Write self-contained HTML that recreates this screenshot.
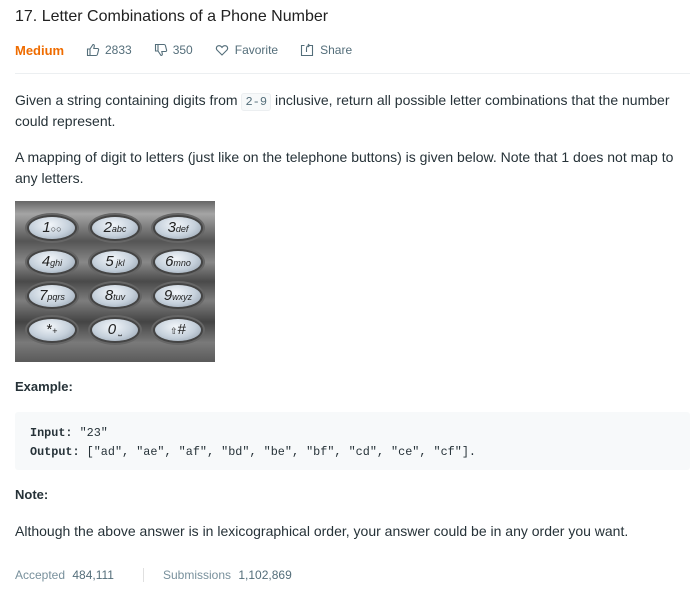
<!DOCTYPE html><html><head><meta charset="utf-8"><style>
body{margin:0;width:700px;height:595px;background:#fff;font-family:"Liberation Sans",sans-serif;color:#263238;position:relative;overflow:hidden}
.a{position:absolute;white-space:nowrap}
.t{font-size:14px;color:#263238;letter-spacing:0px}
.meta{font-size:12px;color:#546e7a;display:flex;align-items:center}
svg{display:block}
code{font-family:"Liberation Mono",monospace;font-size:12px;background:#f7f9fa;border:1px solid #eceff1;border-radius:3px;padding:1px 3px;color:#546e7a}
.k{position:absolute;width:46px;height:22px;border-radius:50%;background:radial-gradient(ellipse at 45% 35%,#f2f6fa 0%,#c5d0db 55%,#8d9aa8 100%);box-shadow:0 0 0 2px #444,0 0 0 4px #666;font-family:"Liberation Sans",sans-serif;font-style:italic;color:#222;font-size:15px;line-height:22px;text-align:center}
.k small{font-size:9px}
.mono{font-family:"Liberation Mono",monospace;font-size:11.8px;color:#263238}
</style></head><body>
<div class="a" style="left:15px;top:8px;font-size:16px;color:#212121">17. Letter Combinations of a Phone Number</div>
<div class="a" style="left:15px;top:43px;font-size:13px;font-weight:bold;color:#ef6c00">Medium</div>
<div class="a meta" style="left:86px;top:43px">
<svg width="14" height="14" viewBox="0 0 14 14" fill="none" stroke="#546e7a" stroke-width="1.1"><path d="M1.5 6h2.5v6.5H1.5zM4 6l3-4.5c1 0 1.5.6 1.3 1.6L7.8 5.5h3.7c.8 0 1.3.7 1.1 1.4l-1.2 4.6c-.2.6-.7 1-1.3 1H4"/></svg>
<span style="margin-left:5px">2833</span>
<svg style="margin-left:22px" width="14" height="14" viewBox="0 0 14 14" fill="none" stroke="#546e7a" stroke-width="1.1"><path d="M1.5 1.5h2.5V8H1.5zM4 8l3 4.5c1 0 1.5-.6 1.3-1.6L7.8 8.5h3.7c.8 0 1.3-.7 1.1-1.4l-1.2-4.6c-.2-.6-.7-1-1.3-1H4"/></svg>
<span style="margin-left:5px">350</span>
<svg style="margin-left:22px" width="14" height="14" viewBox="0 0 14 14" fill="none" stroke="#546e7a" stroke-width="1.1"><path d="M7 12L2 7C.8 5.6 1.3 3 3.8 2.7 5.3 2.5 6.3 3.4 7 4.4 7.7 3.4 8.7 2.5 10.2 2.7 12.7 3 13.2 5.6 12 7z"/></svg>
<span style="margin-left:6px">Favorite</span>
<svg style="margin-left:22px" width="14" height="14" viewBox="0 0 14 14" fill="none" stroke="#546e7a" stroke-width="1.1"><path d="M4.5 2.5h-3v10h11v-10h-3M6.5 9V5.5c0-2 1-3 3-3M8 1l1.5 1.5L8 4"/></svg>
<span style="margin-left:6px">Share</span>
</div>
<div class="a" style="left:15px;top:73px;width:675px;height:1px;background:#eceff1"></div>
<div class="a t" style="left:15px;top:92px">Given a string containing digits from <code>2-9</code> inclusive, return all possible letter combinations that the number</div>
<div class="a t" style="left:15px;top:113px">could represent.</div>
<div class="a t" style="left:15px;top:149px">A mapping of digit to letters (just like on the telephone buttons) is given below. Note that 1 does not map to</div>
<div class="a t" style="left:15px;top:170px">any letters.</div>
<div class="a" style="left:15px;top:201px;width:200px;height:161px;background:linear-gradient(#666 0%,#a5a5a5 8%,#555 25%,#888 38%,#4a4a4a 50%,#7d7d7d 62%,#444 75%,#7a7a7a 88%,#5a5a5a 100%)">
<div class="k" style="left:14px;top:16px">1<small>○○</small></div>
<div class="k" style="left:77px;top:16px">2<small>abc</small></div>
<div class="k" style="left:140px;top:16px">3<small>def</small></div>
<div class="k" style="left:14px;top:50px">4<small>ghi</small></div>
<div class="k" style="left:77px;top:50px">5<small> jkl</small></div>
<div class="k" style="left:140px;top:50px">6<small>mno</small></div>
<div class="k" style="left:14px;top:84px">7<small>pqrs</small></div>
<div class="k" style="left:77px;top:84px">8<small>tuv</small></div>
<div class="k" style="left:140px;top:84px">9<small>wxyz</small></div>
<div class="k" style="left:14px;top:118px;font-style:normal">*<small>+</small></div>
<div class="k" style="left:77px;top:118px">0<small> ⎵</small></div>
<div class="k" style="left:140px;top:118px;font-style:normal"><small>⇧</small>#</div>
</div>
<div class="a" style="left:15px;top:379px;font-size:13px;font-weight:bold">Example:</div>
<div class="a" style="left:15px;top:412px;width:675px;height:58px;background:#f7f9fa;border-radius:3px"></div>
<div class="a mono" style="left:30px;top:426px"><b>Input:</b> "23"</div>
<div class="a mono" style="left:30px;top:445px"><b>Output:</b> ["ad", "ae", "af", "bd", "be", "bf", "cd", "ce", "cf"].</div>
<div class="a" style="left:15px;top:487px;font-size:13px;font-weight:bold">Note:</div>
<div class="a t" style="left:15px;top:523px">Although the above answer is in lexicographical order, your answer could be in any order you want.</div>
<div class="a" style="left:15px;top:568px;font-size:12px;color:#78909c">Accepted <span style="color:#546e7a;margin-left:4px">484,111</span></div>
<div class="a" style="left:143px;top:568px;width:1px;height:14px;background:#e0e0e0"></div>
<div class="a" style="left:163px;top:568px;font-size:12px;color:#78909c">Submissions <span style="color:#546e7a;margin-left:4px">1,102,869</span></div>
</body></html>
